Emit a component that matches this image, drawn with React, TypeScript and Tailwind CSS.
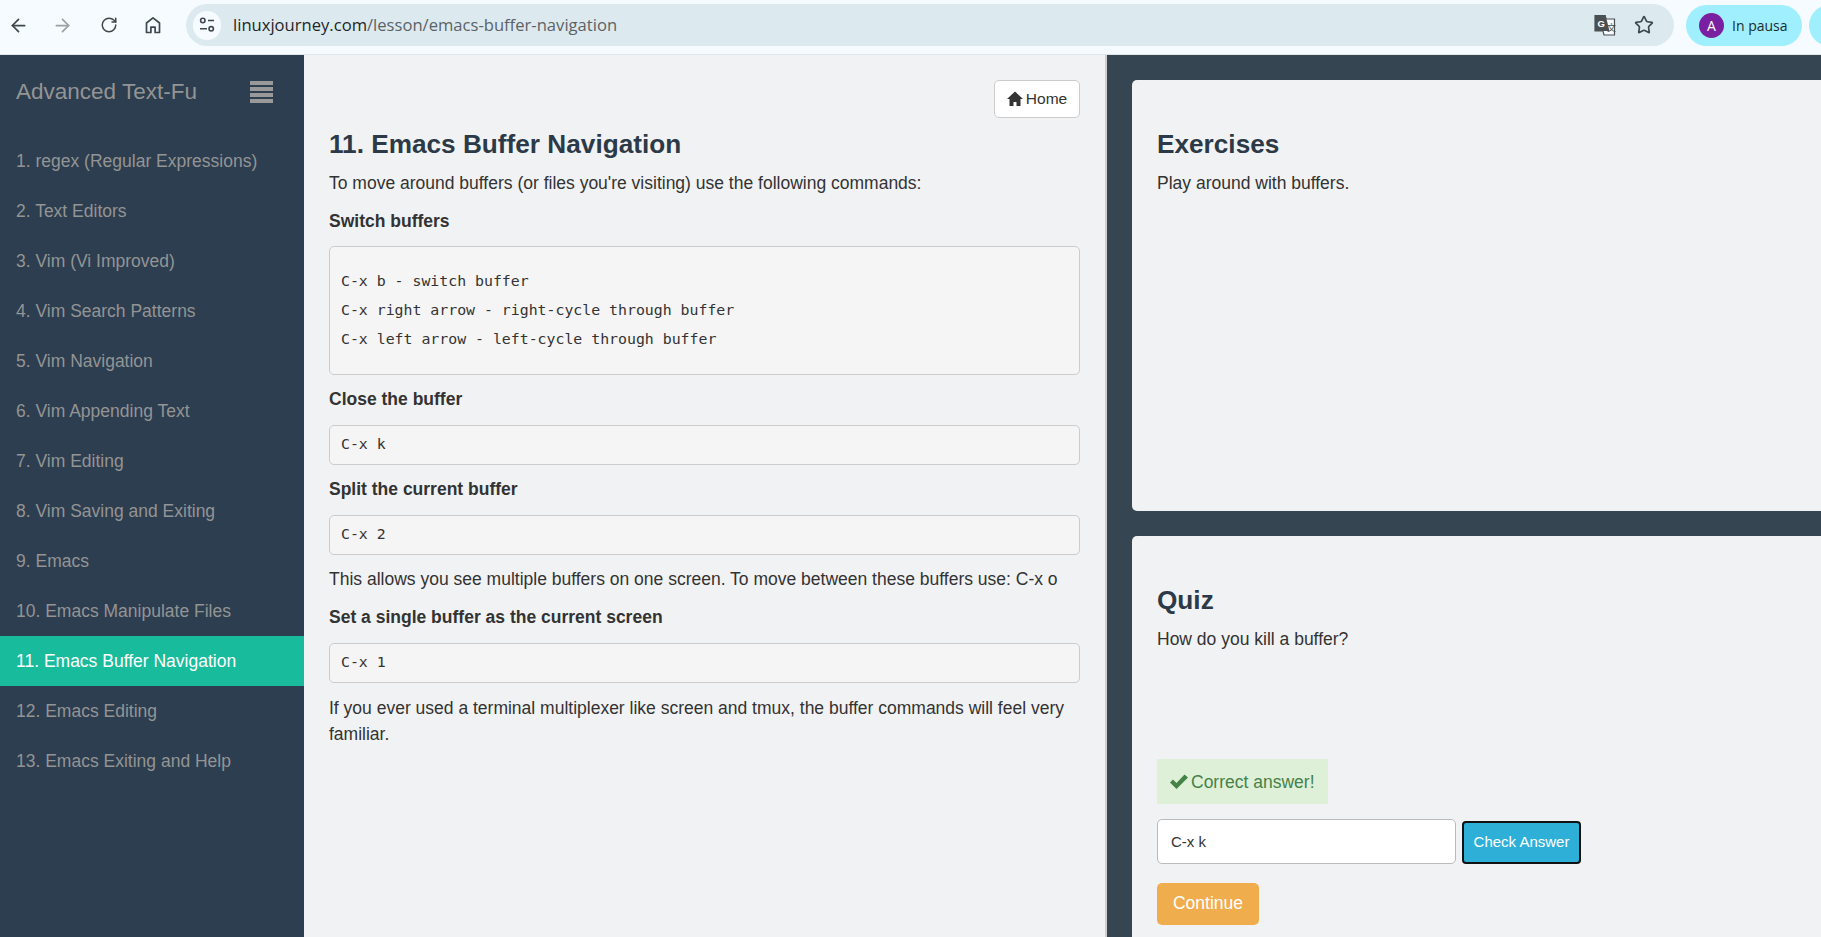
import { ArrowLeft, ArrowRight, RotateCw, Star } from "lucide-react";

const lessons = [
  "1. regex (Regular Expressions)",
  "2. Text Editors",
  "3. Vim (Vi Improved)",
  "4. Vim Search Patterns",
  "5. Vim Navigation",
  "6. Vim Appending Text",
  "7. Vim Editing",
  "8. Vim Saving and Exiting",
  "9. Emacs",
  "10. Emacs Manipulate Files",
  "11. Emacs Buffer Navigation",
  "12. Emacs Editing",
  "13. Emacs Exiting and Help",
];

const heading = "m-0 text-[26.2px] leading-[29px] font-bold text-[#2c3a48]";
const para = "m-0 text-[17.5px] leading-[26px] text-[#333333]";
const sub = "m-0 text-[17.5px] leading-[26px] font-bold text-[#333333]";
const code =
  "m-0 rounded-[5px] border border-[#cccccc] bg-[#f5f5f5] px-[11px] py-[6px] font-['DejaVu_Sans_Mono',monospace] text-[14.85px] leading-[25px] text-[#333333]";

function Toolbar() {
  return (
    <div className="flex h-[55px] shrink-0 items-center border-b border-[#dfe5e9] bg-[#f6fbff] pb-[4px] font-['Open_Sans',sans-serif]">
      <ArrowLeft className="ml-[8px] h-[21px] w-[21px] shrink-0 text-[#3f484d]" strokeWidth={2} />
      <ArrowRight className="ml-[23px] h-[21px] w-[21px] shrink-0 text-[#9aa0a3]" strokeWidth={2} />
      <RotateCw className="ml-[27px] h-[18px] w-[18px] shrink-0 text-[#3f484d]" strokeWidth={2} />
      <svg viewBox="0 0 20 20" className="ml-[25px] h-[20px] w-[20px] shrink-0 text-[#3f484d]" fill="none" stroke="currentColor" strokeWidth="1.7">
        <path d="M3.5 17.5V8L10 2.8 16.5 8v9.5h-4.4v-5.4H7.900v5.400z" strokeLinejoin="round" />
      </svg>
      <div className="ml-[23px] flex h-[42px] w-[1488px] shrink-0 items-center rounded-full bg-[#dceaf0]">
        <div className="ml-[7px] flex h-[29px] w-[28px] items-center justify-center rounded-full bg-[#f6fbff]">
          <svg viewBox="0 0 18 18" className="h-[18px] w-[18px] text-[#3f484d]" fill="none" stroke="currentColor" strokeWidth="1.6">
            <circle cx="4.800" cy="4.500" r="2.200" />
            <path d="M10 4.500h6M2 12.800h7" />
            <circle cx="13.200" cy="12.800" r="2.200" />
          </svg>
        </div>
        <span className="ml-[12px] text-[16.6px] leading-none text-[#5b6266]">
          <span className="text-[#1f2528]">linuxjourney.com</span>/lesson/emacs-buffer-navigation
        </span>
        <svg viewBox="0 0 22 22" className="ml-auto h-[22px] w-[22px]">
          <path d="M1 1.500h10l1 3.500h8.500v16H10l-1-4H1z" fill="#f6fbff" stroke="#4a4f52" strokeWidth="1.200" />
          <path d="M1 1h10.500l4 16H1z" fill="#4a4f52" />
          <text x="3.600" y="12.500" fontSize="9.500" fontWeight="700" fill="#ffffff" fontFamily="Liberation Sans">G</text>
          <text x="13" y="17" fontSize="9" fill="#4a4f52" fontFamily="Noto Sans CJK SC">文</text>
        </svg>
        <Star className="mr-[20px] ml-[18px] h-[20px] w-[20px] text-[#3f484d]" strokeWidth={2} />
      </div>
      <div className="ml-[12px] flex h-[41px] w-[116px] shrink-0 items-center rounded-full bg-[#a0efff]">
        <div className="ml-[13px] flex h-[25px] w-[25px] items-center justify-center rounded-full bg-[#7b1fa2] text-[14px] text-white">A</div>
        <span className="ml-[8px] text-[14px] text-[#1c2b33]">In pausa</span>
      </div>
      <div className="ml-[7px] h-[41px] w-[40px] shrink-0 rounded-l-full bg-[#a0efff]" />
    </div>
  );
}

function Sidebar() {
  return (
    <aside className="w-[304px] shrink-0 bg-[#2c3e50]">
      <div className="flex h-[74px] items-center justify-between pr-[31px] pl-[16px]">
        <span className="text-[22.5px] text-[#949494]">Advanced Text-Fu</span>
        <div className="flex w-[23px] flex-col gap-[2px]">
          <div className="h-[4px] bg-[#999999]" />
          <div className="h-[4px] bg-[#999999]" />
          <div className="h-[4px] bg-[#999999]" />
          <div className="h-[4px] bg-[#999999]" />
        </div>
      </div>
      <nav className="mt-[7px]">
        {lessons.map((name) => (
          <div
            key={name}
            className={`flex h-[50px] items-center pl-[16px] text-[17.5px] ${
              name.startsWith("11.") ? "bg-[#18bc9c] text-white" : "text-[#949494]"
            }`}
          >
            {name}
          </div>
        ))}
      </nav>
    </aside>
  );
}

function Lesson() {
  return (
    <main className="w-[801px] shrink-0 bg-[#f1f2f4] px-[25px] pt-[25px]">
      <div className="flex justify-end">
        <button className="flex h-[38px] w-[86px] items-center justify-center gap-[3px] rounded-[5px] border border-[#cccccc] bg-white pb-[1px] text-[15.5px] text-[#333333]">
          <svg viewBox="0 0 16 16" className="h-[16px] w-[16px]" fill="#333333">
            <path d="M8 0.500 0 8h2.500v7h4v-4h3v4h4V8H16z" />
          </svg>
          Home
        </button>
      </div>
      <h2 className={`${heading} mt-[12px]`}>11. Emacs Buffer Navigation</h2>
      <p className={`${para} mt-[11px]`}>To move around buffers (or files you're visiting) use the following commands:</p>
      <p className={`${sub} mt-[12px]`}>Switch buffers</p>
      <pre className={`${code} mt-[12px] h-[129px] pt-[20px] leading-[29px]`}>
        {"C-x b - switch buffer\nC-x right arrow - right-cycle through buffer\nC-x left arrow - left-cycle through buffer"}
      </pre>
      <p className={`${sub} mt-[11px]`}>Close the buffer</p>
      <pre className={`${code} mt-[13px] h-[40px]`}>C-x k</pre>
      <p className={`${sub} mt-[11px]`}>Split the current buffer</p>
      <pre className={`${code} mt-[13px] h-[40px]`}>C-x 2</pre>
      <p className={`${para} mt-[11px]`}>This allows you see multiple buffers on one screen. To move between these buffers use: C-x o</p>
      <p className={`${sub} mt-[12px]`}>Set a single buffer as the current screen</p>
      <pre className={`${code} mt-[13px] h-[40px]`}>C-x 1</pre>
      <p className={`${para} mt-[12px]`}>If you ever used a terminal multiplexer like screen and tmux, the buffer commands will feel very familiar.</p>
    </main>
  );
}

function Panels() {
  return (
    <section className="min-w-0 flex-1 border-l-2 border-[#cfcfcf] bg-[#364552] pt-[25px] pl-[25px]">
      <div className="h-[431px] w-[800px] rounded-l-[5px] bg-[#f1f2f4] px-[25px] pt-[50px]">
        <h2 className={heading}>Exercises</h2>
        <p className={`${para} mt-[11px]`}>Play around with buffers.</p>
      </div>
      <div className="mt-[25px] h-[500px] w-[800px] rounded-l-[5px] bg-[#f1f2f4] px-[25px] pt-[50px]">
        <h2 className={heading}>Quiz</h2>
        <p className={`${para} mt-[11px]`}>How do you kill a buffer?</p>
        <div className="mt-[107px] flex h-[45px] w-[171px] items-center bg-[#dff0d8] pt-[1px] pl-[13px] text-[17.5px] text-[#458248]">
          <svg viewBox="0 0 18 18" className="mr-[3px] h-[18px] w-[18px]" fill="#458248">
            <path d="M0 9.500 3 6.500l3.500 3.500L14.500 1.500 18 4.500 6.500 16z" />
          </svg>
          Correct answer!
        </div>
        <div className="mt-[15px] flex items-end">
          <input
            readOnly
            value="C-x k"
            className="h-[45px] w-[299px] rounded-[5px] border border-[#bbbbbb] bg-white pl-[13px] text-[15px] text-[#333333] outline-none"
          />
          <button className="ml-[6px] h-[43px] w-[119px] rounded-[4px] border-2 border-[#111111] bg-[#2eafd7] text-[15px] text-white">
            Check Answer
          </button>
        </div>
        <button className="mt-[19px] block h-[42px] w-[102px] rounded-[5px] bg-[#f0ad4e] pb-[2px] text-[17.5px] text-white">
          Continue
        </button>
      </div>
    </section>
  );
}

export default function App() {
  return (
    <div className="flex h-[937px] w-[1821px] flex-col overflow-hidden bg-[#f1f2f4] font-['Liberation_Sans',sans-serif]">
      <Toolbar />
      <div className="flex min-h-0 flex-1">
        <Sidebar />
        <Lesson />
        <Panels />
      </div>
    </div>
  );
}
